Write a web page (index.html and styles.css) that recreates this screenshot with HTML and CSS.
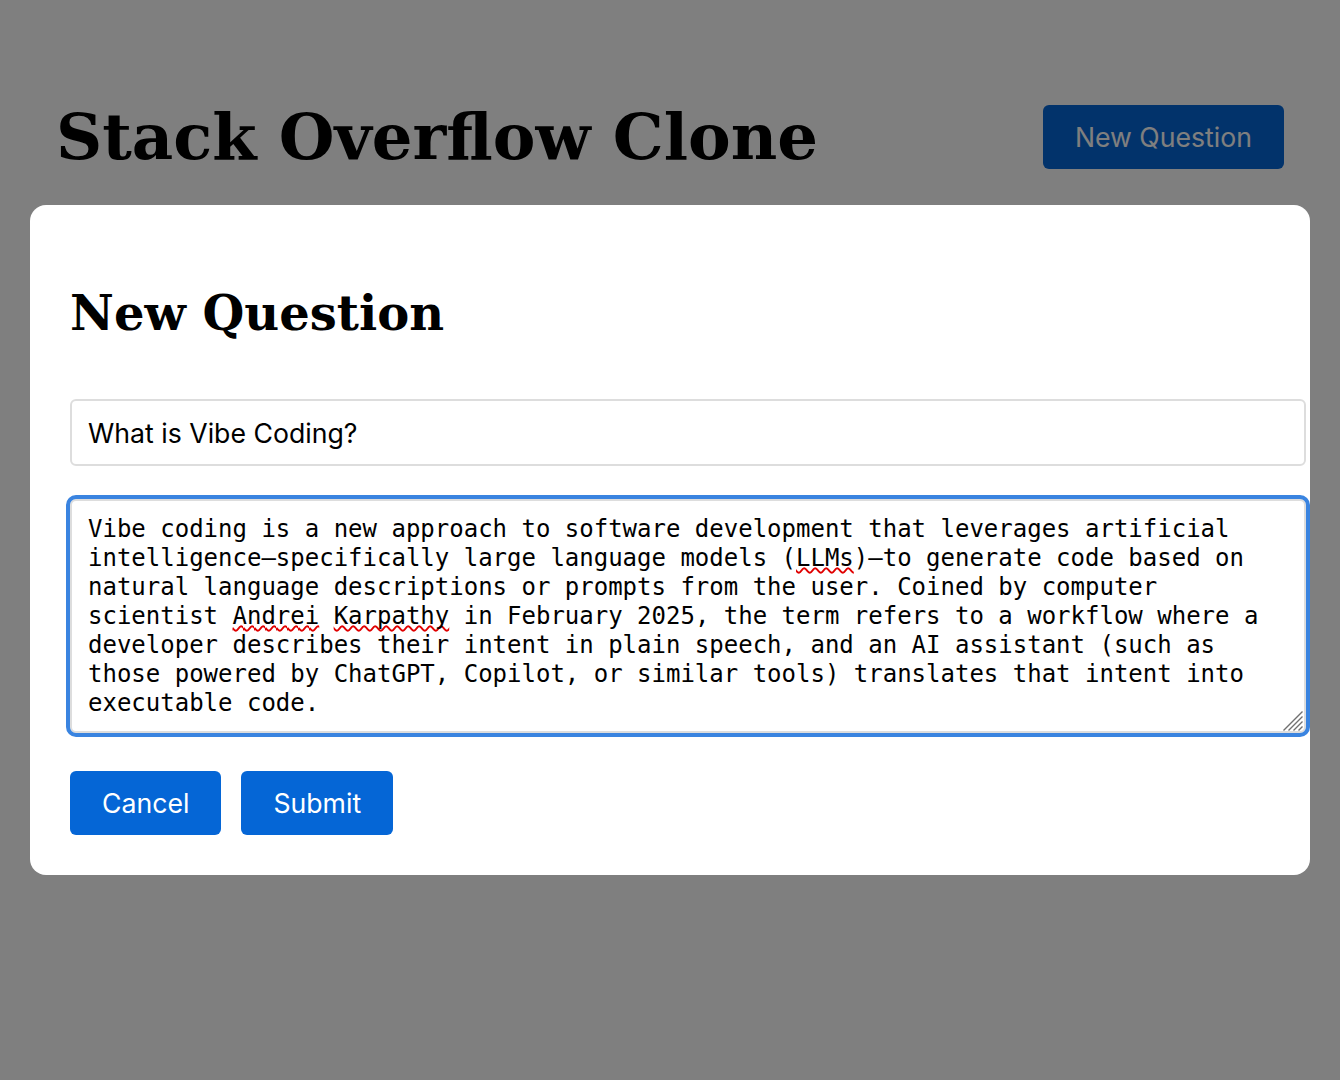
FILE: index.html
```html
<!DOCTYPE html>
<html lang="en">
<head>
<meta charset="utf-8">
<title>Stack Overflow Clone</title>
<link rel="stylesheet" href="styles.css">
</head>
<body>
<div class="page">
  <header class="topbar">
    <h1 class="site-title">Stack Overflow Clone</h1>
    <button class="btn" type="button">New Question</button>
  </header>
</div>
<div class="overlay">
  <div class="modal">
    <h2 class="modal-title">New Question</h2>
    <input class="field title-field" type="text" value="What is Vibe Coding?">
    <div class="area-wrap">
      <div class="field body-field">Vibe coding is a new approach to software development that leverages artificial intelligence—specifically large language models (<span class="typo">LLMs</span>)—to generate code based on natural language descriptions or prompts from the user. Coined by computer scientist <span class="typo">Andrei</span> <span class="typo">Karpathy</span> in February 2025, the term refers to a workflow where a developer describes their intent in plain speech, and an AI assistant (such as those powered by ChatGPT, Copilot, or similar tools) translates that intent into executable code.</div>
      <svg class="grip" width="20" height="20" viewBox="0 0 20 20" aria-hidden="true">
        <path d="M0.5 19.5 L19.5 0.5 M5.5 19.5 L19.5 5.5 M10.5 19.5 L19.5 10.5 M15.5 19.5 L19.5 15.5" stroke="#707070" stroke-width="1.4" fill="none"/>
      </svg>
    </div>
    <div class="actions">
      <button class="btn" type="button">Cancel</button>
      <button class="btn" type="button">Submit</button>
    </div>
  </div>
</div>
</body>
</html>
```
FILE: styles.css
```css
html, body {
  margin: 0;
  background: #ffffff;
}

.page {
  padding: 56px;
}

.topbar {
  display: flex;
  align-items: center;
  justify-content: space-between;
}

.site-title {
  margin: 43px 0;
  font-family: "DejaVu Serif", serif;
  font-weight: 700;
  font-size: 64px;
  color: #000;
}

.btn {
  font-family: Inter, "Noto Sans", sans-serif;
  font-size: 20pt;
  line-height: 32px;
  font-weight: 400;
  color: #ffffff;
  background: #0566d6;
  border: none;
  border-radius: 6px;
  padding: 16px 32px;
  cursor: pointer;
}

.overlay {
  position: fixed;
  inset: 0;
  background: rgba(0, 0, 0, 0.5);
  display: flex;
  align-items: center;
  justify-content: center;
}

.modal {
  width: 1280px;
  box-sizing: border-box;
  background: #ffffff;
  border-radius: 16px;
  padding: 40px;
}

.modal-title {
  margin: 40px 0 58px;
  font-family: "DejaVu Serif", serif;
  font-weight: 700;
  font-size: 48px;
  color: #000;
}

.field {
  display: block;
  width: 100%;
  border: 2px solid #dddddd;
  border-radius: 6px;
  background: #fff;
  color: #000;
}

.title-field {
  font-family: Inter, "Noto Sans", sans-serif;
  font-size: 20pt;
  line-height: 33px;
  padding: 16px 16px 14px;
  margin: 0 0 33px;
  outline: none;
}

.area-wrap {
  position: relative;
  margin: 0 0 38px;
}

.body-field {
  font-family: "DejaVu Sans Mono", monospace;
  font-size: 24px;
  line-height: 29px;
  padding: 14px 16px 13px;
  height: 203px;
  white-space: pre-wrap;
  overflow: hidden;
  outline: 4px solid #3a84e0;
  outline-offset: 0;
}

.grip {
  position: absolute;
  left: 1213px;
  top: 212px;
}

.typo {
  text-decoration: underline wavy #e00000;
  text-decoration-thickness: 1.5px;
  text-underline-offset: 1px;
  text-decoration-skip-ink: none;
}

.actions {
  display: flex;
  gap: 20px;
}
```
